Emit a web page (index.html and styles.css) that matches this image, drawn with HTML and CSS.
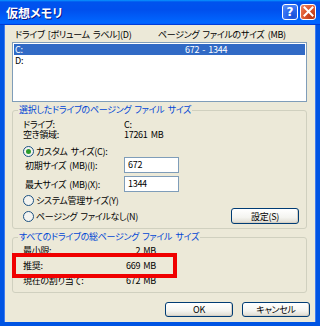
FILE: index.html
```html
<!DOCTYPE html>
<html lang="ja">
<head>
    <meta charset="UTF-8">
    <title>仮想メモリ</title>
    <link rel="stylesheet" href="styles.css">
</head>
<body>
    <div class="window">
        <!-- タイトルバー -->
        <div class="titlebar">
            <span class="title">仮想メモリ</span>
            <div class="caption-buttons">
                <span class="cap-btn help">?</span>
                <span class="cap-btn close">
                    <svg width="11" height="11" viewBox="0 0 11 11"><path d="M1.5 1.5 L9.5 9.5 M9.5 1.5 L1.5 9.5" stroke="#fff" stroke-width="2" stroke-linecap="square"/></svg>
                </span>
            </div>
        </div>

        <div class="client">
            <!-- ドライブ一覧 -->
            <div class="list-header">
                <span class="col-drive">ドライブ [ボリューム ラベル](D)</span>
                <span>ページング ファイルのサイズ (MB)</span>
            </div>
            <div class="listbox">
                <div class="list-row selected"><span class="col-drive-row">C:</span><span>672 - 1344</span></div>
                <div class="list-row"><span class="col-drive-row">D:</span></div>
            </div>

            <!-- 選択したドライブ -->
            <fieldset class="group">
                <legend>選択したドライブのページング ファイル サイズ</legend>
                <div class="group-body">
                    <div class="info-row first"><span class="label">ドライブ:</span><span>C:</span></div>
                    <div class="info-row"><span class="label">空き領域:</span><span>17261 MB</span></div>
                    <div class="radio-row custom">
                        <svg class="radio" width="11" height="11" viewBox="0 0 11 11"><circle cx="5.5" cy="5.5" r="5" fill="#f4f4f0" stroke="#1c5180"/><circle cx="5.5" cy="5.5" r="2.5" fill="#2a9a2a"/></svg>
                        <span>カスタム サイズ(C):</span>
                    </div>
                    <div class="field-row"><span class="label indent">初期サイズ (MB)(I):</span><span class="textbox">672</span></div>
                    <div class="field-row second"><span class="label indent">最大サイズ (MB)(X):</span><span class="textbox">1344</span></div>
                    <div class="radio-row system">
                        <svg class="radio" width="11" height="11" viewBox="0 0 11 11"><circle cx="5.5" cy="5.5" r="5" fill="#f4f4f0" stroke="#1c5180"/></svg>
                        <span>システム管理サイズ(Y)</span>
                    </div>
                    <div class="radio-row last">
                        <svg class="radio" width="11" height="11" viewBox="0 0 11 11"><circle cx="5.5" cy="5.5" r="5" fill="#f4f4f0" stroke="#1c5180"/></svg>
                        <span>ページング ファイルなし(N)</span>
                        <button class="xp-btn set-btn">設定(S)</button>
                    </div>
                </div>
            </fieldset>

            <!-- 合計 -->
            <fieldset class="group totals">
                <legend>すべてのドライブの総ページング ファイル サイズ</legend>
                <div class="group-body">
                    <div class="stat-row"><span>最小限:</span><span>2 MB</span></div>
                    <div class="stat-row recommended"><span>推奨:</span><span>669 MB</span></div>
                    <div class="stat-row"><span>現在の割り当て:</span><span>672 MB</span></div>
                </div>
            </fieldset>

            <div class="dialog-buttons">
                <button class="xp-btn">OK</button>
                <button class="xp-btn">キャンセル</button>
            </div>
        </div>
    </div>
</body>
</html>
```

FILE: styles.css
```css
/* Base */
*, *::before, *::after {
    box-sizing: border-box;
    margin: 0;
    padding: 0;
}

body {
    font-family: "Noto Sans CJK JP", "Noto Sans", sans-serif;
    font-size: 9px;
    letter-spacing: -0.3px;
    word-spacing: 1.5px;
    font-feature-settings: "palt";
    color: #000;
    background: #ece9d8;
}

/* Window frame */
.window {
    width: 320px;
    height: 326px;
    display: flex;
    flex-direction: column;
    background: #ece9d8;
    border: 4px solid #0054e3;
    border-top: none;
    box-shadow: inset 1px 0 #3d7bf0, inset -1px 0 #3d7bf0;
}

.titlebar {
    height: 25px;
    margin: 0 -4px;
    padding: 0 4px 0 6px;
    display: flex;
    align-items: center;
    justify-content: space-between;
    background: linear-gradient(to bottom, #0997ff 0%, #0053ee 8%, #0050ee 40%, #0066ff 88%, #0066ff 93%, #005bff 95%, #003dd7 96%, #003dd7 100%);
}

.title {
    color: #fff;
    font-size: 12px;
    font-weight: bold;
    letter-spacing: 0;
    text-shadow: 1px 1px #0a1883;
}

.caption-buttons {
    display: flex;
    gap: 2px;
    margin-top: -2px;
}

.cap-btn {
    width: 16px;
    height: 16px;
    border: 1px solid #fff;
    border-radius: 3px;
    display: flex;
    align-items: center;
    justify-content: center;
    color: #fff;
    font-family: "DejaVu Sans", sans-serif;
    font-weight: bold;
    font-size: 12px;
    letter-spacing: 0;
}

.cap-btn.help {
    background: radial-gradient(circle at 70% 80%, #1b4fd6 0%, #2e6cf0 50%, #5d93f7 100%);
}

.cap-btn.close {
    background: radial-gradient(circle at 80% 80%, #b53414 0%, #e05a32 55%, #ef8a68 100%);
}

/* Client area */
.client {
    flex: 1;
    padding: 4px 9px 0 8px;
    display: flex;
    flex-direction: column;
}

.list-header {
    height: 12px;
    line-height: 12px;
    display: flex;
    padding-left: 3px;
}

.col-drive {
    width: 143px;
}

.listbox {
    margin-top: 1px;
    height: 60px;
    background: #fff;
    border: 1px solid #7f9db9;
    padding: 1px;
}

.list-row {
    height: 11px;
    line-height: 11px;
    display: flex;
    padding-left: 1px;
}

.list-row.selected {
    background: #316ac5;
    color: #fff;
}

.col-drive-row {
    width: 170px;
}

/* Group boxes */
.group {
    margin-top: 2px;
    border: 1px solid #d0d0bf;
    border-radius: 3px;
    padding: 0 7px 4px 5px;
    min-width: 0;
}

.group legend {
    color: #0046d5;
    padding: 0 1px;
    height: 12px;
    line-height: 12px;
}

.group-body {
    padding-left: 5px;
}

.info-row {
    height: 10px;
    line-height: 10px;
    display: flex;
}

.info-row.first {
    margin-top: 4px;
}

.label {
    width: 101px;
}

.label.indent {
    padding-left: 2px;
}

.radio-row {
    height: 12px;
    display: flex;
    align-items: center;
    gap: 2px;
}

.radio-row.custom {
    margin-top: 5px;
}

.radio-row.system {
    margin-top: 2px;
}

.radio-row.last {
    margin-top: 2px;
    height: 16px;
}

.field-row {
    height: 16px;
    display: flex;
    align-items: center;
}

.field-row.second {
    margin-top: 3px;
}

.textbox {
    width: 55px;
    height: 16px;
    line-height: 14px;
    padding-left: 3px;
    background: #fff;
    border: 1px solid #7f9db9;
}

/* Buttons */
.xp-btn {
    font-family: inherit;
    font-size: 9px;
    letter-spacing: -0.3px;
    font-feature-settings: "palt";
    color: #000;
    border: 1px solid #003c74;
    border-radius: 3px;
    background: linear-gradient(to bottom, #ffffff 0%, #f4f4f0 60%, #e3e1d8 90%, #d6d0c5 100%);
    box-shadow: inset -1px -1px #d6d0c5;
}

.set-btn {
    margin-left: auto;
    width: 68px;
    height: 16px;
}

/* Totals */
.stat-row {
    width: 133px;
    height: 15px;
    line-height: 15px;
    display: flex;
    justify-content: space-between;
}

.stat-row.recommended {
    position: relative;
}

.stat-row.recommended::after {
    content: "";
    position: absolute;
    left: -11px;
    top: -5px;
    width: 165px;
    height: 25px;
    border: 4px solid #f00000;
}

.dialog-buttons {
    margin-top: 9px;
    margin-right: -3px;
    display: flex;
    justify-content: flex-end;
    gap: 9px;
}

.dialog-buttons .xp-btn {
    width: 68px;
    height: 15px;
}
```
